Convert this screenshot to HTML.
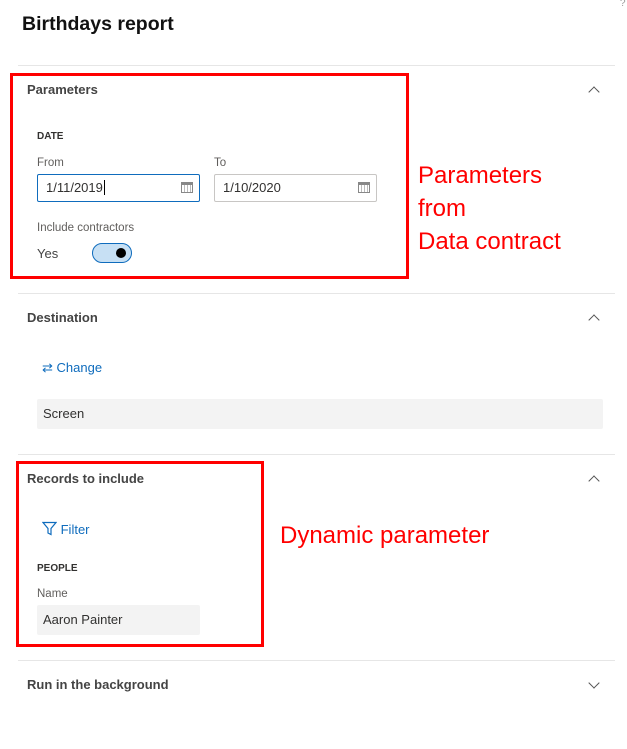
<!DOCTYPE html>
<html><head><style>
body{margin:0;width:627px;height:749px;background:#fff;font-family:"Liberation Sans",sans-serif;position:relative;overflow:hidden;color:#323130}
.a{position:absolute}
.sep{position:absolute;left:18px;width:597px;height:1px;background:#e6e6e6}
.h{position:absolute;font-size:13px;font-weight:bold;color:#444}
.lbl{position:absolute;font-size:11.5px;color:#605e5c}
.cap{position:absolute;font-size:10px;font-weight:bold;color:#323130}
.red{position:absolute;border:3px solid #f00;box-sizing:border-box}
.rt{position:absolute;color:#f00;font-size:24px;line-height:33px}
.chev{position:absolute;width:7px;height:7px;border-left:1.5px solid #555;border-top:1.5px solid #555}
.inp{position:absolute;height:28px;box-sizing:border-box;border:1px solid #c8c6c4;border-radius:2px;font-size:13px;line-height:26px;padding-left:8px}
.cal{position:absolute;right:6px;top:7px;width:12px;height:11px;border:1px solid #888;box-sizing:border-box;background:repeating-linear-gradient(90deg,#fff 0 2px,#bbb 2px 3px)}
.cal:before{content:"";position:absolute;left:-1px;right:-1px;top:-1px;height:3px;background:#888}
</style></head><body>
<div class="a" style="left:22px;top:13px;font-size:19.5px;font-weight:bold;color:#111">Birthdays report</div>
<div class="a" style="left:620px;top:-2px;font-size:10px;color:#999">?</div>
<div class="sep" style="top:65px"></div>
<div class="h" style="left:27px;top:82px">Parameters</div>
<div class="chev" style="left:590px;top:88px;transform:rotate(45deg)"></div>
<div class="cap" style="left:37px;top:131px">DATE</div>
<div class="lbl" style="left:37px;top:157px">From</div>
<div class="lbl" style="left:214px;top:157px">To</div>
<div class="inp" style="left:37px;top:174px;width:163px;border-color:#0f6cbd">1/11/2019<span style="border-left:1px solid #000;margin-left:1px"></span><div class="cal"></div></div>
<div class="inp" style="left:214px;top:174px;width:163px">1/10/2020<div class="cal"></div></div>
<div class="lbl" style="left:37px;top:222px">Include contractors</div>
<div class="a" style="left:37px;top:246px;font-size:13px;color:#444">Yes</div>
<div class="a" style="left:92px;top:243px;width:40px;height:20px;box-sizing:border-box;border:1px solid #0f6cbd;border-radius:10px;background:#c7e0f4"><div class="a" style="left:23px;top:4px;width:10px;height:10px;border-radius:5px;background:#000"></div></div>
<div class="red" style="left:10px;top:73px;width:399px;height:206px"></div>
<div class="rt" style="left:418px;top:159px">Parameters<br>from<br>Data contract</div>
<div class="sep" style="top:293px"></div>
<div class="h" style="left:27px;top:310px">Destination</div>
<div class="chev" style="left:590px;top:316px;transform:rotate(45deg)"></div>
<div class="a" style="left:42px;top:360px;font-size:13px;color:#0f6cbd">⇄ Change</div>
<div class="a" style="left:37px;top:399px;width:566px;height:30px;background:#f3f3f3;border-radius:2px;font-size:13px;line-height:30px;padding-left:6px;box-sizing:border-box">Screen</div>
<div class="sep" style="top:454px"></div>
<div class="h" style="left:27px;top:471px">Records to include</div>
<div class="chev" style="left:590px;top:477px;transform:rotate(45deg)"></div>
<div class="a" style="left:42px;top:521px;font-size:13px;color:#0f6cbd"><svg width="15" height="15" viewBox="0 0 15 15" style="vertical-align:-2px"><path d="M1 1.5h13l-5 6v6l-3-1.5v-4.5z" fill="none" stroke="#0f6cbd" stroke-width="1.2"/></svg> Filter</div>
<div class="cap" style="left:37px;top:563px">PEOPLE</div>
<div class="lbl" style="left:37px;top:588px">Name</div>
<div class="a" style="left:37px;top:605px;width:163px;height:30px;background:#f3f3f3;border-radius:2px;font-size:13px;line-height:30px;padding-left:6px;box-sizing:border-box">Aaron Painter</div>
<div class="red" style="left:16px;top:461px;width:248px;height:186px"></div>
<div class="rt" style="left:280px;top:519px">Dynamic parameter</div>
<div class="sep" style="top:660px"></div>
<div class="h" style="left:27px;top:677px">Run in the background</div>
<div class="chev" style="left:590px;top:679px;transform:rotate(225deg)"></div>
</body></html>
